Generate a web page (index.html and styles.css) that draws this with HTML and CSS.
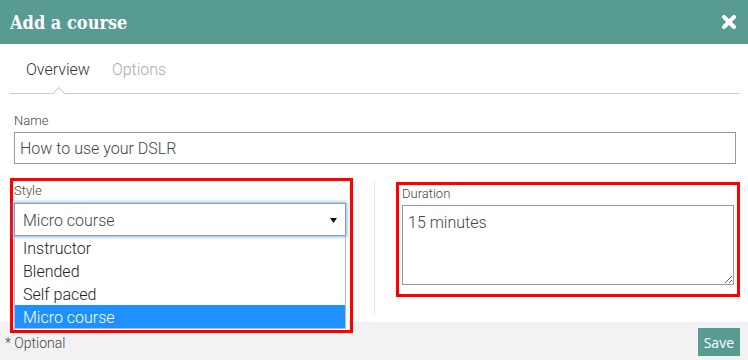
FILE: index.html
```html
<!DOCTYPE html>
<html lang="en">
<head>
  <meta charset="UTF-8">
  <title>Add a course</title>
  <link rel="stylesheet" href="styles.css">
</head>
<body>

<div class="modal">
  <header class="modal-head">
    <h1 class="modal-title">Add a course</h1>
    <svg class="close" width="14" height="14" viewBox="0 0 14 14">
      <path d="M2 2 L12 12 M12 2 L2 12" stroke="#fff" stroke-width="4" stroke-linecap="round"/>
    </svg>
  </header>

  <div class="modal-body">
    <nav class="tabs">
      <span class="tab active">Overview</span>
      <span class="tab">Options</span>
    </nav>

    <div class="field name-field">
      <label for="courseName">Name</label>
      <input type="text" id="courseName" value="How to use your DSLR">
    </div>

    <div class="row">
      <div class="mark style-box">
        <label>Style</label>
        <div class="select">
          <span>Micro course</span>
          <svg width="7" height="5" viewBox="0 0 7 5"><path d="M0 0 H7 L3.5 5 Z" fill="#111"/></svg>
        </div>
        <ul class="options">
          <li>Instructor</li>
          <li>Blended</li>
          <li>Self paced</li>
          <li class="selected">Micro course</li>
        </ul>
      </div>

      <div class="divider"></div>

      <div class="mark duration-box">
        <label for="duration">Duration</label>
        <textarea id="duration">15 minutes</textarea>
      </div>
    </div>
  </div>

  <footer class="modal-foot">
    <span class="hint">* Optional</span>
    <button class="save">Save</button>
  </footer>
</div>

</body>
</html>
```

FILE: styles.css
```css
* {
  box-sizing: border-box;
}
body {
  margin: 0;
  font-family: Roboto, 'Noto Sans', sans-serif;
  color: #333;
  background: #fff;
}
.modal {
  width: 748px;
  height: 360px;
  display: flex;
  flex-direction: column;
  overflow: hidden;
}
.modal-head {
  height: 44px;
  flex: none;
  background: #579b93;
  display: flex;
  align-items: center;
  justify-content: space-between;
  padding: 0 12px 0 10px;
}
.modal-title {
  margin: 0;
  font-family: 'DejaVu Serif Condensed', 'DejaVu Serif', serif;
  font-stretch: condensed;
  font-weight: bold;
  font-size: 18px;
  color: #fff;
}
.modal-body {
  flex: 1;
  padding: 0 8px 0 10px;
}
.tabs {
  display: flex;
  align-items: flex-end;
  gap: 22px;
  height: 50px;
  padding: 0 0 14px 16px;
  border-bottom: 1px solid #ccc;
}
.tab {
  position: relative;
  font-size: 16px;
  font-weight: 300;
  line-height: 19px;
  color: #aaa;
}
.tab.active {
  color: #333;
}
.tab.active::after {
  content: '';
  position: absolute;
  left: 50%;
  bottom: -19px;
  width: 8.5px;
  height: 8.5px;
  margin-left: -4.25px;
  background: #fff;
  border-top: 1px solid #ccc;
  border-left: 1px solid #ccc;
  transform: rotate(45deg);
}
label {
  display: block;
  font-size: 13px;
  font-weight: 300;
  line-height: 16px;
  color: #444;
}
.name-field {
  margin-top: 19px;
  padding: 0 4px;
}
.name-field label {
  margin-bottom: 3px;
}
input[type="text"], textarea {
  width: 100%;
  border: 1px solid #999;
  border-radius: 0;
  font-family: Roboto, 'Noto Sans', sans-serif;
  font-size: 16px;
  font-weight: 300;
  color: #444;
  outline: none;
}
input[type="text"] {
  height: 32px;
  padding: 0 5px;
}
.row {
  margin-top: 14px;
  height: 144px;
  display: grid;
  grid-template-columns: 343px 1px 344px;
  column-gap: 21px;
  align-items: start;
}
.mark {
  border: 3px solid #f00;
}
.style-box {
  position: relative;
  z-index: 1;
  background: #fff;
  padding: 2px 4px 1px 1px;
}
.style-box label {
  margin-bottom: 4px;
}
.select {
  height: 33px;
  display: flex;
  align-items: center;
  justify-content: space-between;
  padding: 1px 8px 0 8px;
  border: 1px solid #999;
  box-shadow: 0 0 3px 1px rgba(80, 160, 240, 0.75);
  font-size: 16px;
  font-weight: 300;
  color: #444;
}
.options {
  list-style: none;
  margin: 0;
  padding: 0;
  border: 1px solid #a9bed8;
  border-top: none;
}
.options li {
  height: 23px;
  line-height: 25px;
  padding-left: 8px;
  font-size: 16px;
  font-weight: 300;
  color: #222;
}
.options li.selected {
  background: #1e90ff;
  color: #fff;
}
.divider {
  margin-top: 4px;
  height: 133px;
  background: #e6e6e6;
}
.duration-box {
  margin-top: 4px;
  padding: 1px 3px 9px 3px;
}
.duration-box label {
  margin-bottom: 3px;
}
textarea {
  display: block;
  height: 80px;
  padding: 7px 5px;
  line-height: 19px;
}
.modal-foot {
  height: 38px;
  flex: none;
  background: #f2f2f2;
  display: flex;
  align-items: center;
  justify-content: space-between;
  padding: 0 8px 0 5px;
}
.hint {
  font-size: 14px;
  font-weight: 300;
  color: #444;
  margin-top: 4px;
}
.save {
  height: 28px;
  margin-top: 2px;
  padding: 0 6px;
  border: none;
  background: #579b93;
  color: #fff;
  font-family: 'Open Sans', sans-serif;
  font-size: 14px;
}
```
